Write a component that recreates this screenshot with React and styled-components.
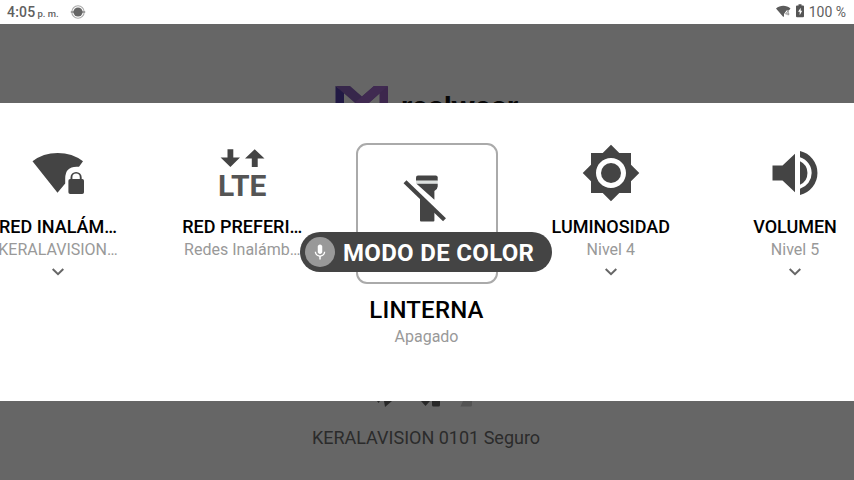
import React from "react";
import styled, { createGlobalStyle } from "styled-components";

const INK = "#444444";

const GlobalStyle = createGlobalStyle`
  * { box-sizing: border-box; }
  body { margin: 0; overflow: hidden; background: #666; font-family: Roboto, "Noto Sans", sans-serif; }
  svg { display: block; flex: none; }
`;

const Screen = styled.div`
  position: relative;
  display: grid;
  grid-template-rows: 24px 79px 298px 79px;
  width: 854px;
  height: 480px;
  overflow: hidden;
`;

const StatusBar = styled.header`
  display: flex;
  align-items: center;
  justify-content: space-between;
  padding: 0 8px 0 7px;
  background: #fff;
  color: #5f5f5f;
  font-size: 14px;
  line-height: 24px;
`;

const StatusGroup = styled.div`
  display: flex;
  align-items: center;
  height: 24px;
`;

const Clock = styled.span`
  font-weight: 480;
  letter-spacing: 0.2px;
`;

const Meridiem = styled.span`
  margin: 4px 9px 0 2px;
  font-size: 9.5px;
  font-weight: 500;
`;

const Battery = styled.span`
  margin-left: 4px;
`;

const BrandArea = styled.div`
  display: flex;
  align-items: flex-start;
  gap: 12px;
  padding: 62px 0 0 335px;
  overflow: hidden;
  background: #666;
`;

const BrandName = styled.span`
  margin-top: 4px;
  color: #080808;
  font-family: Inter, Roboto, sans-serif;
  font-size: 28px;
  font-weight: 700;
  line-height: 34px;
  letter-spacing: -0.3px;
`;

const Panel = styled.main`
  display: flex;
  justify-content: center;
  background: #fff;
  overflow: hidden;
  padding-top: 40px;
`;

const Item = styled.section`
  flex: 0 0 184.25px;
  display: flex;
  flex-direction: column;
  align-items: center;
  margin-left: ${(p) => (p.$first ? "-1px" : "0")};
`;

const Title = styled.div`
  margin-top: ${(p) => (p.$large ? "11px" : "12px")};
  color: #000;
  font-size: ${(p) => (p.$large ? "24px" : "18px")};
  line-height: ${(p) => (p.$large ? "30px" : "24px")};
  font-weight: 500;
  letter-spacing: ${(p) => (p.$large ? "0.2px" : "0")};
  white-space: nowrap;
`;

const Detail = styled.div`
  margin-top: ${(p) => (p.$large ? "1px" : "0")};
  height: 22px;
  color: #999;
  font-size: 16px;
  line-height: 22px;
  white-space: nowrap;
`;

const Chevron = styled.svg`
  margin-top: 6px;
`;

const LteIcon = styled.div`
  display: flex;
  flex-direction: column;
  align-items: center;
  width: 60px;
  height: 60px;
`;

const LteLabel = styled.span`
  color: #555;
  font-size: 30px;
  font-weight: 700;
  line-height: 30px;
  margin-top: 3px;
`;

const FocusFrame = styled.div`
  display: flex;
  justify-content: center;
  width: 142px;
  height: 141px;
  padding: 24px 2px 0 0;
  border: 2px solid #aaa;
  border-radius: 11px;
`;

const VoiceHint = styled.div`
  position: absolute;
  left: 300px;
  top: 232px;
  display: flex;
  align-items: center;
  width: 252px;
  height: 40px;
  padding-left: 5px;
  gap: 8px;
  border-radius: 20px;
  background: ${INK};
  color: #fff;
  font-size: 24px;
  font-weight: 700;
  letter-spacing: 0.32px;
  white-space: nowrap;
`;

const MicBadge = styled.span`
  display: flex;
  align-items: center;
  justify-content: center;
  width: 30px;
  height: 30px;
  border-radius: 50%;
  background: #999;
`;

const HintText = styled.span`
  line-height: 40px;
  margin-top: 2px;
`;

const NetworkArea = styled.footer`
  display: flex;
  flex-direction: column;
  align-items: center;
  padding-right: 2px;
  background: #666;
`;

const NetworkName = styled.div`
  margin-top: 19px;
  color: #2b2b2b;
  font-size: 18px;
  line-height: 24px;
`;

function RecordDot() {
  return (
    <svg width="19" height="18" viewBox="-1 0 19 18">
      <circle cx="9" cy="9" r="6.2" fill="none" stroke="#aaa" strokeWidth="1.1" />
      <path d="M1.800 9h14.400" stroke="#999" strokeWidth="1.800" />
      <circle cx="9" cy="9" r="4.600" fill="#666" />
    </svg>
  );
}

function StatusIcons() {
  return (
    <svg width="29" height="24" viewBox="0 0 29 24">
      <path d="M0 8.600C4.100 4.900 10.500 4.900 14.500 8.600L12.800 10.500H10.500L8 14v2.200l-.7.800z" fill="#5c5c5c" />
      <path d="M12.200 15.300v-4.500l-2.600 3.200h3.800" fill="none" stroke="#888" strokeWidth=".9" />
      <path d="M21 5.600h1.500V4.200h3v1.400H27q1 0 1 1v9.600q0 1-1 1h-6q-1 0-1-1V6.600q0-1 1-1z" fill="#555" />
      <path d="M24.700 7.800v3h1.500l-2.500 4.400v-3.500h-1.600z" fill="#fff" />
    </svg>
  );
}

function BrandMark() {
  return (
    <svg width="54" height="46" viewBox="0 0 54 46">
      <path d="M.5 0V46H9V6z" fill="#211944" />
      <path d="M53 0V46H44.500V6z" fill="#3d274d" />
      <path d="M.5 0H15L27 10.500 39 0H53L27 23z" fill="#37274b" />
      <path d="M39 0H53L27 23 20 16.500z" fill="#402a51" />
    </svg>
  );
}

function WifiLock() {
  return (
    <svg width="60" height="60" viewBox="0 0 60 60" fill={INK}>
      <path d="M4.500 18.300Q15 10 29.700 10T55 18.300L51 23.800Q37.200 22.500 37.200 35.500V40.500L29.500 49.800z" />
      <path fillRule="evenodd" d="M42.500 36V34.500A5.600 5.500 0 0 1 53.700 34.500V36H54.200Q56 36 56 37.800V49.200Q56 51 54.200 51H42.200Q40.400 51 40.400 49.200V37.800Q40.400 36 42.200 36zM44.400 36H51.800V34.300A3.700 3.700 0 0 0 44.400 34.300z" />
    </svg>
  );
}

function Lte() {
  return (
    <LteIcon>
      <svg width="60" height="25" viewBox="0 0 60 25" fill={INK}>
        <path d="M15.500 6.300H21.300V14.600H28L18.400 24 8.600 14.600H15.500z" />
        <path d="M42.700 6.300L52.500 15.500H45.700V24H39.800V15.500H33z" />
      </svg>
      <LteLabel>LTE</LteLabel>
    </LteIcon>
  );
}

function FlashlightOff() {
  return (
    <svg width="60" height="60" viewBox="0 0 60 60" fill={INK}>
      <path d="M20 8.500Q20 6.500 22 6.500H39.700Q41.700 6.500 41.700 8.500V11.700H20z" />
      <path d="M20 11.700H41.700V14.700H20z" fill="#dce0de" />
      <path d="M20.500 14.700H41.700V17.500Q41.700 20 38.400 22V30.800L20.500 14.700z" />
      <path d="M24 27.500L38.400 41V51.500Q38.400 52.500 37.400 52.500H25Q24 52.500 24 51.500z" />
      <path d="M9 12.700L48.500 50.700" stroke={INK} strokeWidth="4.200" />
    </svg>
  );
}

function Brightness() {
  return (
    <svg width="60" height="60" viewBox="0 0 24 24" fill={INK}>
      <path d="M20 8.690V4h-4.690L12 .69 8.690 4H4v4.690L.69 12 4 15.310V20h4.690L12 23.310 15.310 20H20v-4.690L23.310 12 20 8.690zM12 18c-3.310 0-6-2.690-6-6s2.690-6 6-6 6 2.690 6 6-2.690 6-6 6z" />
      <circle cx="12" cy="12" r="4" />
    </svg>
  );
}

function Volume() {
  return (
    <svg width="60" height="60" viewBox="0 0 24 24" fill={INK}>
      <path d="M3 9v6h4l5 4.700V4.300L7 9z" />
      <path d="M14 7.300A5.200 5.200 0 0 1 14 16.700z" />
      <path d="M14 3.230v2.460A6.600 6.600 0 0 1 14 18.310v2.460A9 9 0 0 0 14 3.230z" />
    </svg>
  );
}

function Microphone() {
  return (
    <svg width="18" height="18" viewBox="0 0 24 24" fill="#fff">
      <path d="M12 14.500c1.660 0 3-1.340 3-3V5c0-1.660-1.340-3-3-3S9 3.340 9 5v6.500c0 1.660 1.340 3 3 3z" />
      <path d="M17.300 11.500c0 3-2.540 5.100-5.300 5.100s-5.300-2.100-5.300-5.100H5c0 3.410 2.720 6.230 6 6.720V22h2v-3.780c3.280-.48 6-3.300 6-6.720z" />
    </svg>
  );
}

function NetworkIcons() {
  return (
    <svg width="98" height="6" viewBox="0 0 98 6" fill="#292929">
      <path d="M0 0h3L1.500 2zM7 0h8L8 6z" />
      <path d="M44 0h9l-4.500 5zM55 0h8v4q0 1.500-1.500 1.500h-5Q55 5.500 55 4z" />
      <path d="M86 0h9v4q0 1.500-1.500 1.500H83.500z" fill="#535353" />
    </svg>
  );
}

const settings = [
  { title: "RED INALÁM…", detail: "KERALAVISION…", icon: <WifiLock />, expandable: true },
  { title: "RED PREFERI…", detail: "Redes Inalámb…", icon: <Lte /> },
  { title: "LINTERNA", detail: "Apagado", icon: <FlashlightOff />, focused: true },
  { title: "LUMINOSIDAD", detail: "Nivel 4", icon: <Brightness />, expandable: true },
  { title: "VOLUMEN", detail: "Nivel 5", icon: <Volume />, expandable: true },
];

function SettingItem({ item, first }) {
  return (
    <Item $first={first}>
      {item.focused ? <FocusFrame>{item.icon}</FocusFrame> : item.icon}
      <Title $large={item.focused}>{item.title}</Title>
      <Detail $large={item.focused}>{item.detail}</Detail>
      {item.expandable && (
        <Chevron width="14" height="10" viewBox="0 0 14 10" fill="none">
          <path d="M1.700 2L7 7.200 12.300 2" stroke="#666" strokeWidth="2" />
        </Chevron>
      )}
    </Item>
  );
}

export default function App() {
  return (
    <>
      <GlobalStyle />
      <Screen>
        <StatusBar>
          <StatusGroup>
            <Clock>4:05</Clock>
            <Meridiem>p. m.</Meridiem>
            <RecordDot />
          </StatusGroup>
          <StatusGroup>
            <StatusIcons />
            <Battery>100 %</Battery>
          </StatusGroup>
        </StatusBar>
        <BrandArea>
          <BrandMark />
          <BrandName>realwear</BrandName>
        </BrandArea>
        <Panel>
          {settings.map((item, index) => (
            <SettingItem key={item.title} item={item} first={index === 0} />
          ))}
        </Panel>
        <NetworkArea>
          <NetworkIcons />
          <NetworkName>KERALAVISION 0101 Seguro</NetworkName>
        </NetworkArea>
        <VoiceHint>
          <MicBadge>
            <Microphone />
          </MicBadge>
          <HintText>MODO DE COLOR</HintText>
        </VoiceHint>
      </Screen>
    </>
  );
}
